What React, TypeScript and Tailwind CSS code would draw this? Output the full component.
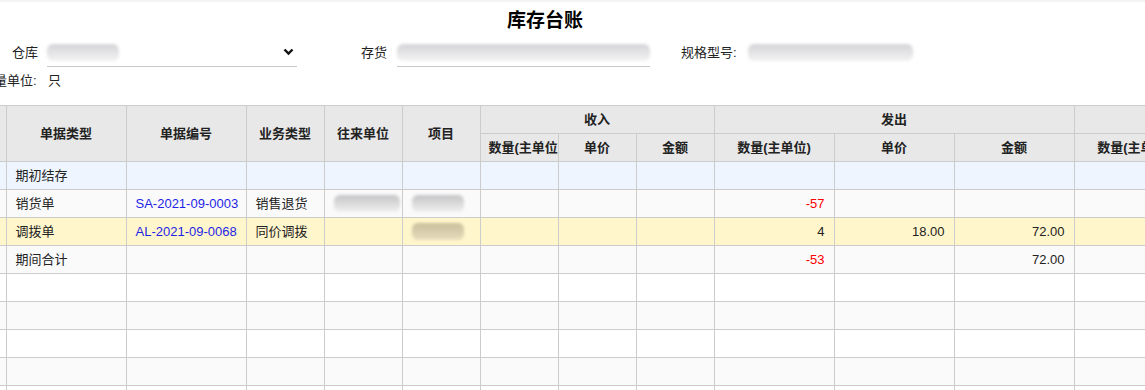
import React from 'react';

type Row = {
  type?: string;
  no?: string;
  biz?: string;
  partner?: 'gray' | null;
  item?: 'gray' | 'beige' | null;
  outQty?: string;
  outPrice?: string;
  outAmt?: string;
  bg: string;
};

const rows: Row[] = [
  { type: '期初结存', bg: 'bg-[#eef5fe]' },
  { type: '销货单', no: 'SA-2021-09-0003', biz: '销售退货', partner: 'gray', item: 'gray', outQty: '-57', bg: 'bg-[#fafafa]' },
  { type: '调拨单', no: 'AL-2021-09-0068', biz: '同价调拨', item: 'beige', outQty: '4', outPrice: '18.00', outAmt: '72.00', bg: 'bg-[#fff6cc]' },
  { type: '期间合计', outQty: '-53', outAmt: '72.00', bg: 'bg-[#fafafa]' },
  { bg: 'bg-white' },
  { bg: 'bg-[#fafafa]' },
  { bg: 'bg-white' },
  { bg: 'bg-[#fafafa]' },
  { bg: 'bg-white' },
];

const td = 'border border-[#cccccc] h-[28px] px-[9px] whitespace-nowrap overflow-hidden';
const th = 'border border-[#cccccc] h-[28px] px-[8px] font-bold text-center whitespace-nowrap overflow-hidden text-[#222]';

function Blur({ w, tone }: { w: number; tone: 'gray' | 'beige' | 'light' }) {
  const cls =
    tone === 'gray'
      ? 'bg-gradient-to-b from-[#c4c4c6] to-[#f0f0f0]'
      : tone === 'beige'
      ? 'bg-gradient-to-b from-[#c9bf9c] to-[#e6ddbd]'
      : 'bg-gradient-to-b from-[#d4d4d8] to-[#f3f3f3]';
  return <div className={`h-[17px] rounded-[6px] blur-[1.5px] ${cls}`} style={{ width: w }} />;
}

export default function App() {
  const numCls = (v?: string) => (v && v.startsWith('-') ? 'text-[#ff0000]' : 'text-[#222]');
  return (
    <div
      className="h-[390px] w-[1145px] overflow-hidden bg-white text-[13px] text-[#222] border-t-2 border-[#f4f4f4]"
      style={{ fontFamily: '"Liberation Sans", "Noto Sans CJK SC", sans-serif' }}
    >
      <div className="h-[36px] pt-[7px] pr-[55px] text-center text-[19px] font-bold leading-[24px] text-black">库存台账</div>

      <div className="flex h-[29px] items-center">
        <span className="ml-[12px] w-[35px]">仓库</span>
        <div className="flex h-[29px] w-[250px] items-center justify-between border-b border-[#c8c8c8] pr-[2px]">
          <Blur w={72} tone="light" />
          <svg width="11" height="8" viewBox="0 0 11 8" className="mr-[1px]">
            <polyline points="1.5,1.5 5.5,5.5 9.5,1.5" fill="none" stroke="#111" strokeWidth="2.4" />
          </svg>
        </div>
        <span className="ml-[64px] w-[36px]">存货</span>
        <div className="flex h-[29px] w-[253px] items-center border-b border-[#c8c8c8]">
          <Blur w={253} tone="light" />
        </div>
        <span className="ml-[31px] w-[67px]">规格型号:</span>
        <div className="flex h-[29px] items-center">
          <Blur w={165} tone="light" />
        </div>
      </div>

      <div className="flex h-[27px] items-center overflow-hidden">
        <span className="ml-[-6px] w-[54px]">量单位:</span>
        <span>只</span>
      </div>

      <div className="mt-[11px]">
        <table className="table-fixed border-collapse" style={{ width: 1194 }}>
          <colgroup>
            <col style={{ width: 6 }} />
            <col style={{ width: 120 }} />
            <col style={{ width: 120 }} />
            <col style={{ width: 78 }} />
            <col style={{ width: 78 }} />
            <col style={{ width: 78 }} />
            <col style={{ width: 78 }} />
            <col style={{ width: 78 }} />
            <col style={{ width: 78 }} />
            <col style={{ width: 120 }} />
            <col style={{ width: 120 }} />
            <col style={{ width: 120 }} />
            <col style={{ width: 120 }} />
          </colgroup>
          <thead className="bg-[#e8e8e8]">
            <tr>
              <th rowSpan={2} className="border border-l-0 border-[#cccccc] p-0" />
              <th rowSpan={2} className={th}>单据类型</th>
              <th rowSpan={2} className={th}>单据编号</th>
              <th rowSpan={2} className={th}>业务类型</th>
              <th rowSpan={2} className={th}>往来单位</th>
              <th rowSpan={2} className={th}>项目</th>
              <th colSpan={3} className={th}>收入</th>
              <th colSpan={3} className={th}>发出</th>
              <th className={th} />
            </tr>
            <tr>
              <th className={`${th} text-left`}>数量(主单位)</th>
              <th className={th}>单价</th>
              <th className={th}>金额</th>
              <th className={th}>数量(主单位)</th>
              <th className={th}>单价</th>
              <th className={th}>金额</th>
              <th className={th}>数量(主单位)</th>
            </tr>
          </thead>
          <tbody>
            {rows.map((r, i) => (
              <tr key={i} className={r.bg}>
                <td className="border border-l-0 border-[#cccccc] h-[28px] p-0" />
                <td className={td}>{r.type}</td>
                <td className={`${td} text-center text-[#1f1fe6]`}>{r.no}</td>
                <td className={td}>{r.biz}</td>
                <td className={`${td} px-[6px]`}>{r.partner ? <Blur w={66} tone="gray" /> : null}</td>
                <td className={`${td} px-[6px]`}>
                  {r.item ? <Blur w={52} tone={r.item === 'beige' ? 'beige' : 'gray'} /> : null}
                </td>
                <td className={td} />
                <td className={td} />
                <td className={td} />
                <td className={`${td} text-right ${numCls(r.outQty)}`}>{r.outQty}</td>
                <td className={`${td} text-right`}>{r.outPrice}</td>
                <td className={`${td} text-right`}>{r.outAmt}</td>
                <td className={td} />
              </tr>
            ))}
          </tbody>
        </table>
      </div>
    </div>
  );
}
